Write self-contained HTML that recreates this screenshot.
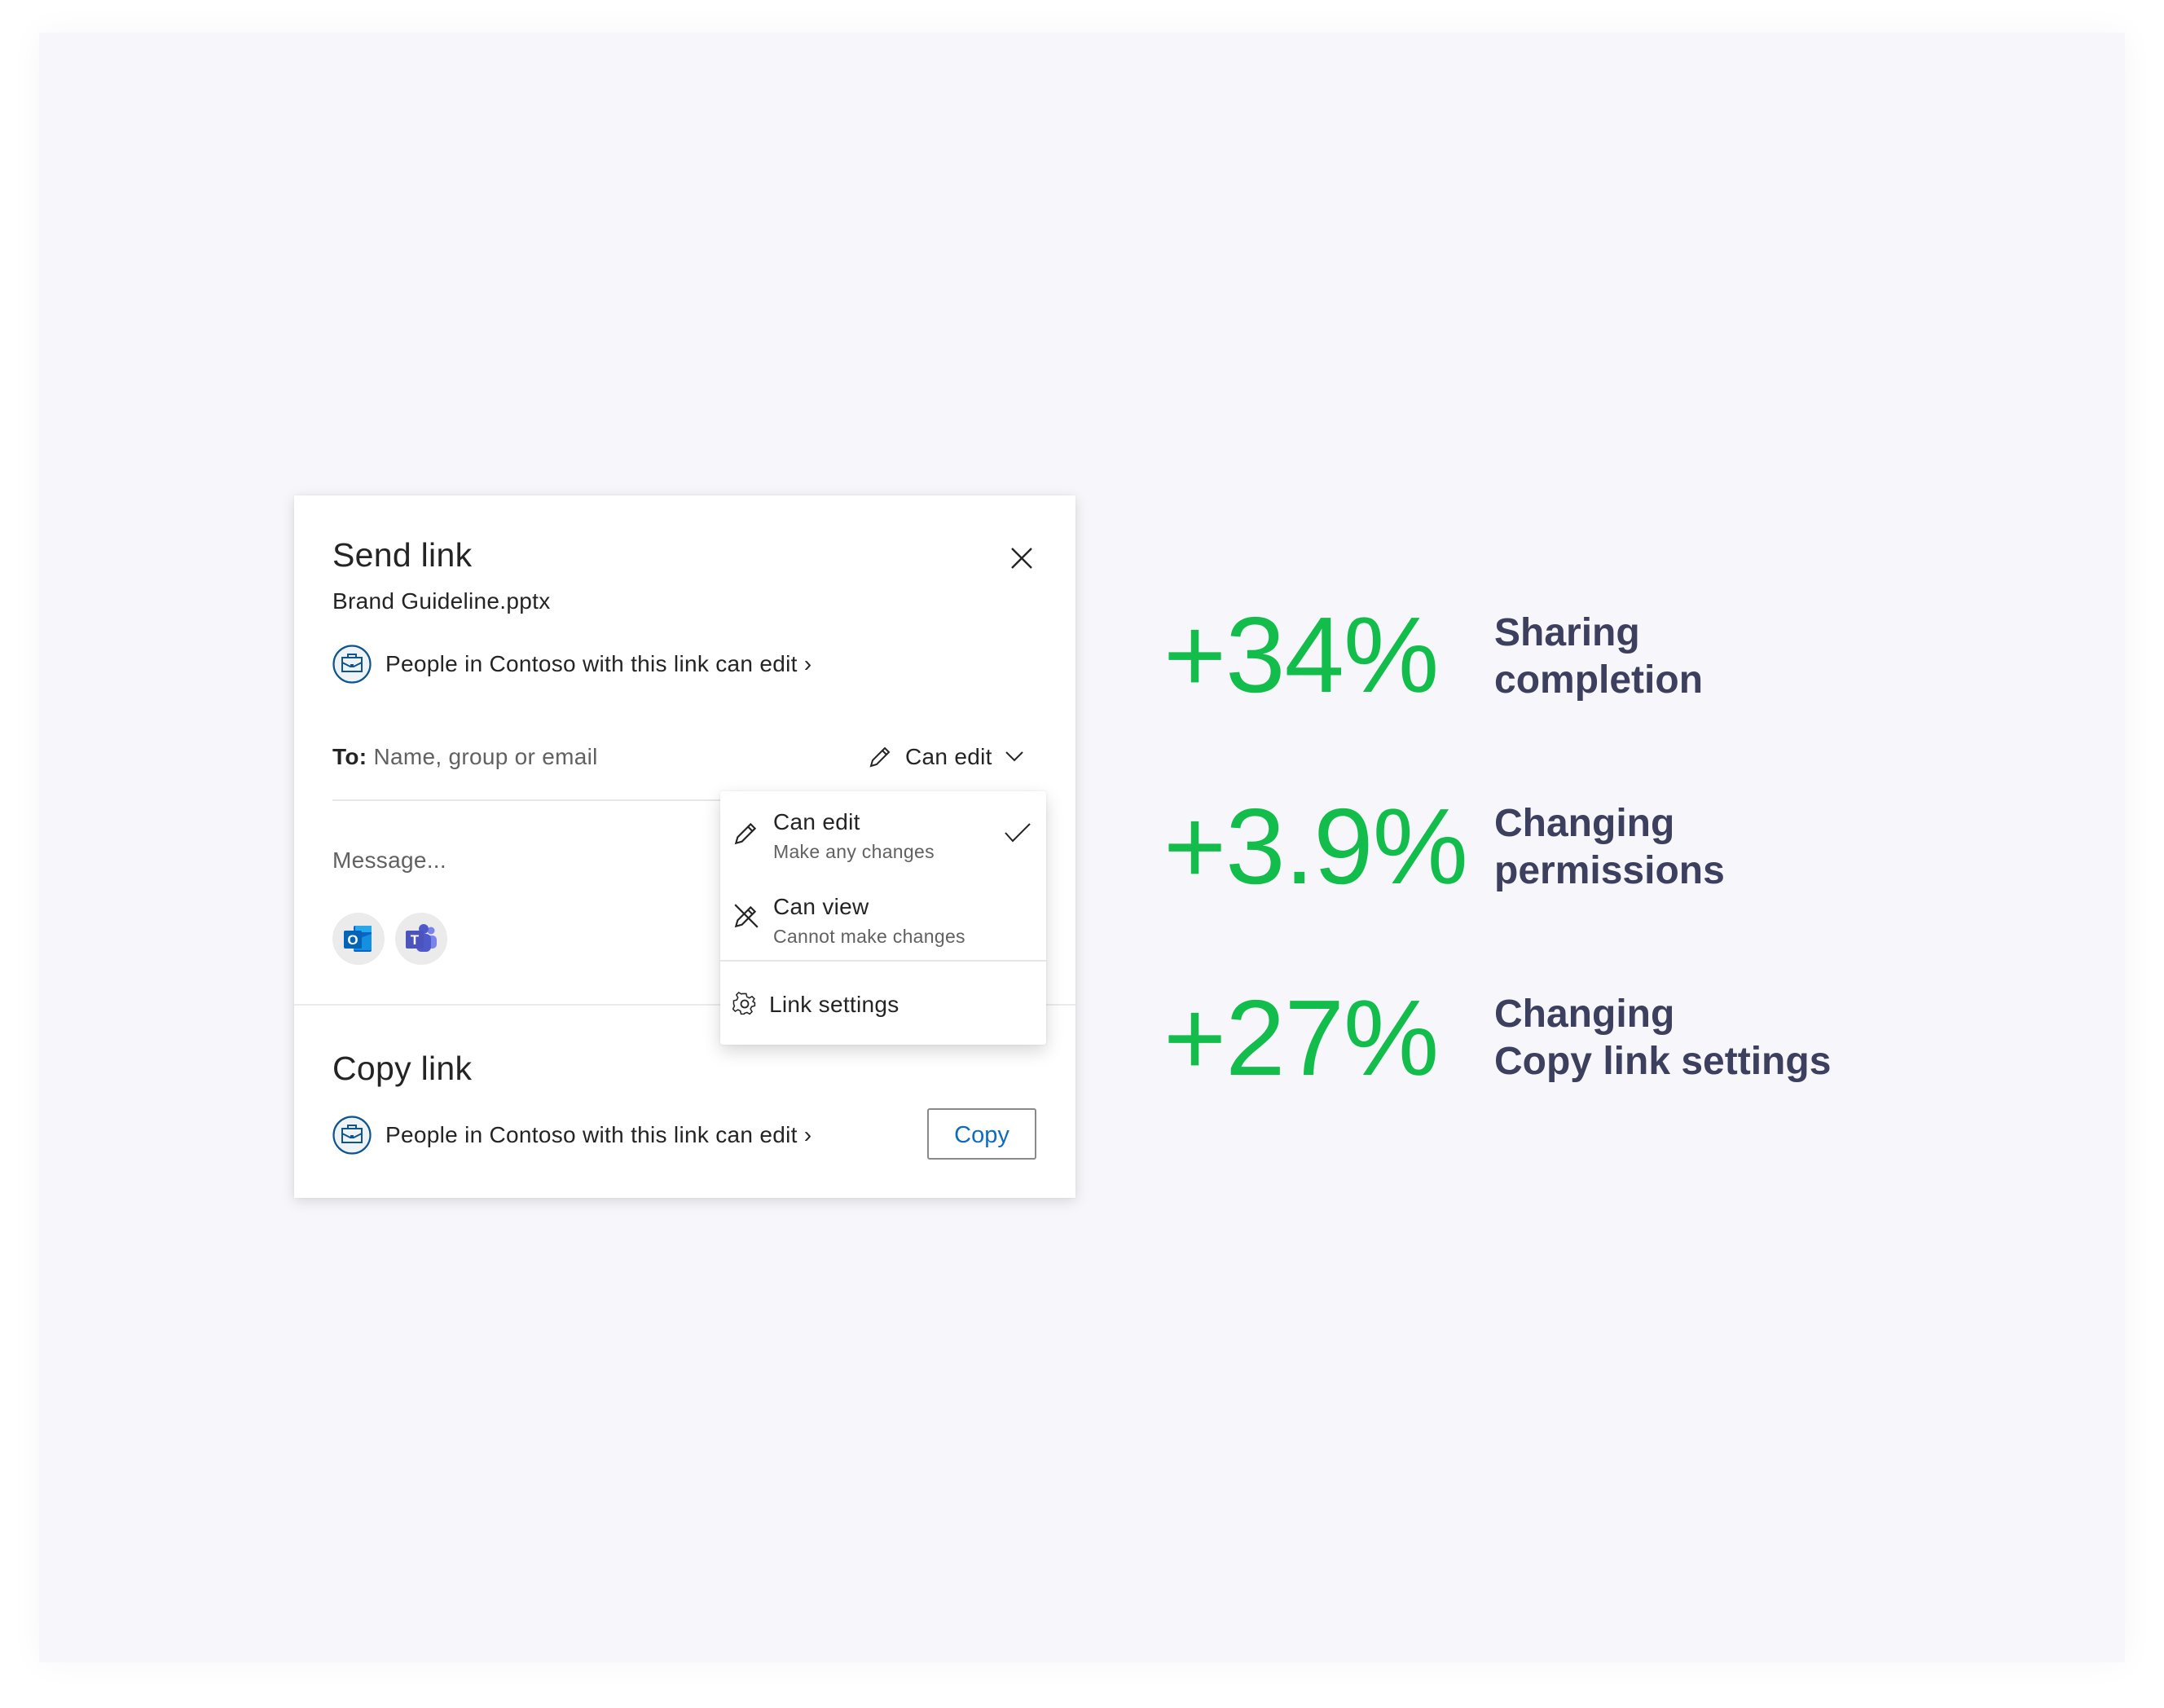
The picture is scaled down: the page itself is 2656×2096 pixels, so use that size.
<!DOCTYPE html>
<html><head><meta charset="utf-8">
<style>
*{margin:0;padding:0;box-sizing:border-box}
html,body{width:2656px;height:2096px;background:#fff;overflow:hidden;font-family:"Liberation Sans",sans-serif}
.card{position:absolute;left:48px;top:40px;width:2560px;height:2000px;background:#f7f7fb;box-shadow:0 0 40px rgba(0,0,0,0.04)}
.abs{position:absolute;white-space:nowrap}
.dlg{position:absolute;left:361px;top:608px;width:959px;height:862px;background:#fff;box-shadow:0 4px 16px rgba(0,0,0,0.13),0 0 3px rgba(0,0,0,0.06)}
.t{color:#242424}
.menu{position:absolute;left:884px;top:971px;width:400px;height:311px;background:#fff;box-shadow:0 8px 22px rgba(0,0,0,0.16),0 0 3px rgba(0,0,0,0.08);border-radius:3px}
.num{position:absolute;color:#12bd4b;font-size:132px;line-height:1;white-space:nowrap;letter-spacing:-1px}
.lbl{position:absolute;color:#3d3f5e;font-weight:bold;font-size:48px;line-height:58px;white-space:nowrap}
.f27{font-size:28px;letter-spacing:0.3px}
</style></head><body>
<div class="card"></div>

<div class="dlg">
  <div class="abs t" style="left:47px;top:50px;font-size:41px;letter-spacing:0.3px">Send link</div>
  <svg class="abs" style="left:878px;top:62px" width="30" height="30" viewBox="0 0 30 30"><path d="M3 3L27 27M27 3L3 27" stroke="#242424" stroke-width="2.4"/></svg>
  <div class="abs t f27" style="left:47px;top:114px">Brand Guideline.pptx</div>

  <svg class="abs" style="left:47px;top:183px" width="48" height="48" viewBox="0 0 48 48"><circle cx="24" cy="24" r="22.5" fill="#eef3f8" stroke="#0f548c" stroke-width="2.2"/><rect x="12" y="16" width="24" height="17" fill="none" stroke="#0f548c" stroke-width="2"/><path d="M19 16v-4h10v4M12 22l10 5h4l10-5" fill="none" stroke="#0f548c" stroke-width="2"/><rect x="22" y="24" width="4" height="4" fill="#0f548c"/></svg>
  <div class="abs t f27" style="left:112px;top:191px">People in Contoso with this link can edit ›</div>

  <div class="abs f27" style="left:47px;top:305px;color:#616161"><b style="color:#242424">To:</b> Name, group or email</div>
  <svg class="abs" style="left:703px;top:305px" width="32" height="32" viewBox="0 0 32 32"><path d="M5 27l2-7L22 5l5 5L12 25z M19 8l5 5" fill="none" stroke="#242424" stroke-width="2"/></svg>
  <div class="abs t f27" style="left:750px;top:305px">Can edit</div>
  <svg class="abs" style="left:872px;top:312px" width="24" height="16" viewBox="0 0 24 16"><path d="M2 3l10 10L22 3" fill="none" stroke="#242424" stroke-width="2"/></svg>
  <div class="abs" style="left:47px;top:373px;width:864px;height:2px;background:#e6e6e6"></div>

  <div class="abs f27" style="left:47px;top:432px;color:#616161">Message...</div>
  <div class="abs" style="left:47px;top:512px;width:64px;height:64px;border-radius:50%;background:#ebebeb"></div>
  <svg class="abs" style="left:47px;top:512px" width="64" height="64" viewBox="0 0 64 64"><rect x="26" y="16" width="22" height="32" rx="2" fill="#0a64c8"/><path d="M26 34l22-8v20H26z" fill="#1490df"/><rect x="28" y="16" width="20" height="8" fill="#28a8ea"/><rect x="14" y="22" width="22" height="22" rx="2" fill="#0364b8"/><text x="25" y="39" font-size="17" font-weight="bold" fill="#fff" text-anchor="middle" font-family="Liberation Sans">O</text></svg>
  <div class="abs" style="left:124px;top:512px;width:64px;height:64px;border-radius:50%;background:#ebebeb"></div>
  <svg class="abs" style="left:124px;top:512px" width="64" height="64" viewBox="0 0 64 64"><circle cx="44" cy="22" r="4.5" fill="#7b83eb"/><rect x="38" y="28" width="13" height="16" rx="5" fill="#7b83eb"/><circle cx="35" cy="20" r="6" fill="#5059c9"/><rect x="26" y="26" width="18" height="22" rx="6" fill="#5059c9"/><rect x="13" y="22" width="22" height="22" rx="2" fill="#4b53bc"/><text x="24" y="39" font-size="17" font-weight="bold" fill="#fff" text-anchor="middle" font-family="Liberation Sans">T</text></svg>

  <div class="abs" style="left:0;top:624px;width:959px;height:2px;background:#ebebeb"></div>
  <div class="abs t" style="left:47px;top:680px;font-size:41px;letter-spacing:0.3px">Copy link</div>
  <svg class="abs" style="left:47px;top:761px" width="48" height="48" viewBox="0 0 48 48"><circle cx="24" cy="24" r="22.5" fill="#eef3f8" stroke="#0f548c" stroke-width="2.2"/><rect x="12" y="16" width="24" height="17" fill="none" stroke="#0f548c" stroke-width="2"/><path d="M19 16v-4h10v4M12 22l10 5h4l10-5" fill="none" stroke="#0f548c" stroke-width="2"/><rect x="22" y="24" width="4" height="4" fill="#0f548c"/></svg>
  <div class="abs t f27" style="left:112px;top:769px">People in Contoso with this link can edit ›</div>
  <div class="abs" style="left:777px;top:752px;width:134px;height:63px;border:2px solid #8a8a8a;border-radius:3px;color:#0f6cbd;font-size:29px;text-align:center;line-height:62px">Copy</div>
</div>

<div class="menu">
  <svg class="abs" style="left:15px;top:34px" width="34" height="34" viewBox="0 0 32 32"><path d="M4 28l2-7L21 6l5 5L11 26z M18 9l5 5" fill="none" stroke="#242424" stroke-width="2"/></svg>
  <div class="abs t f27" style="left:65px;top:22px">Can edit</div>
  <div class="abs" style="left:65px;top:61px;font-size:23px;color:#616161;letter-spacing:0.3px">Make any changes</div>
  <svg class="abs" style="left:348px;top:38px" width="34" height="26" viewBox="0 0 34 26"><path d="M2 13l9 10L32 2" fill="none" stroke="#242424" stroke-width="2"/></svg>
  <svg class="abs" style="left:15px;top:136px" width="34" height="34" viewBox="0 0 32 32"><path d="M4 28l2-7L21 6l5 5L11 26z M18 9l5 5 M3 3l26 26" fill="none" stroke="#242424" stroke-width="2"/></svg>
  <div class="abs t f27" style="left:65px;top:126px">Can view</div>
  <div class="abs" style="left:65px;top:165px;font-size:23px;color:#616161;letter-spacing:0.3px">Cannot make changes</div>
  <div class="abs" style="left:0;top:207px;width:400px;height:2px;background:#e6e6e6"></div>
  <svg class="abs" style="left:15px;top:246px" width="30" height="30" viewBox="0 0 30 30"><circle cx="15" cy="15" r="4.5" fill="none" stroke="#242424" stroke-width="1.8"/><path d="M13 2h4l1 4 3 1.5 3.5-2 3 3-2 3.5L27 13l1 .5v4l-4 1-1.5 3 2 3.5-3 3-3.5-2L15 27l-.5 1h-4l-1-4-3-1.5-3.5 2-3-3 2-3.5L1 15v-4l4-1 1.5-3-2-3.5 3-3 3.5 2L12 2z" fill="none" stroke="#242424" stroke-width="1.6" transform="translate(0.5 0.5) scale(0.96)"/></svg>
  <div class="abs t f27" style="left:60px;top:246px">Link settings</div>
</div>

<div class="num" style="left:1428px;top:738px">+34%</div>
<div class="num" style="left:1428px;top:973px">+3.9%</div>
<div class="num" style="left:1428px;top:1208px">+27%</div>

<div class="lbl" style="left:1834px;top:748px">Sharing<br>completion</div>
<div class="lbl" style="left:1834px;top:982px">Changing<br>permissions</div>
<div class="lbl" style="left:1834px;top:1216px">Changing<br>Copy link settings</div>
</body></html>
